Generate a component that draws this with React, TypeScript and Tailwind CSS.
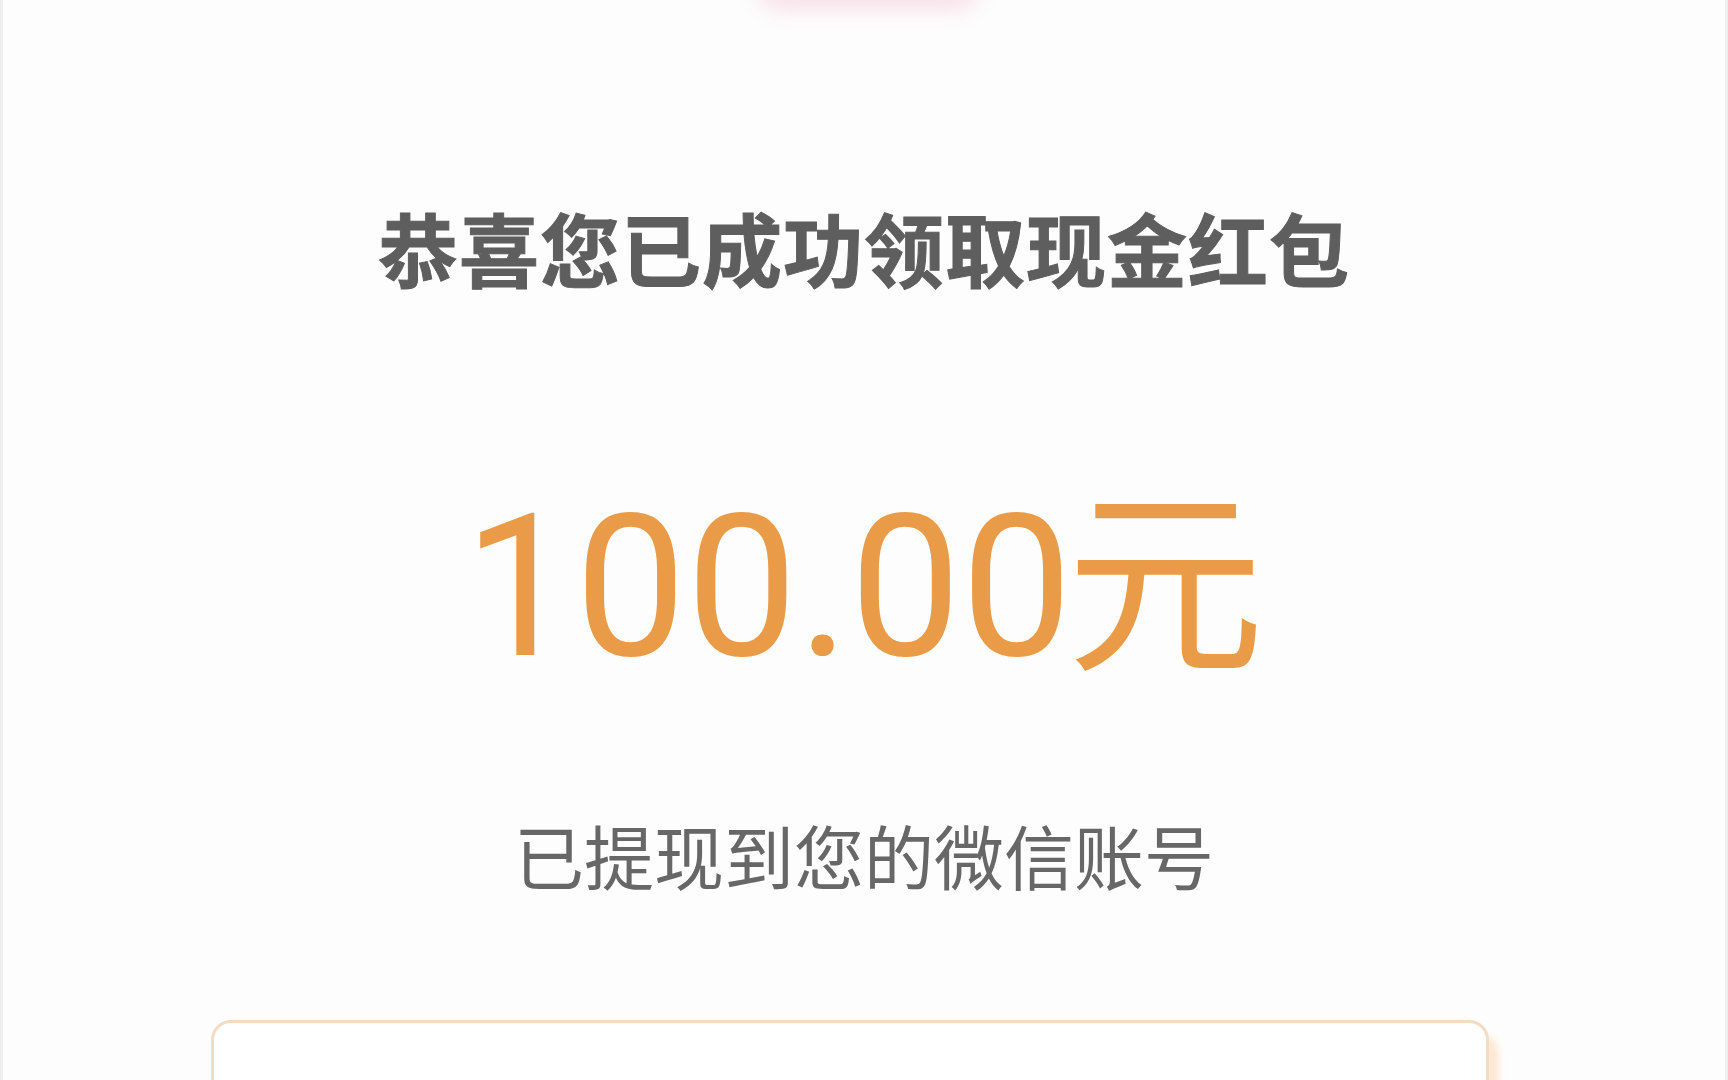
import React from 'react';

// Red packet withdrawal result screen
const amount = '100.00';

export default function App() {
    return (
        <div className="relative h-screen w-full overflow-hidden bg-[#fdfdfd] border-l-[3px] border-r-[3px] border-[#efefef]">
            <div className="absolute left-[755px] top-[-30px] h-[40px] w-[220px] rounded-full bg-[#f6d6e2] blur-[10px] opacity-70" />

            <div
                className="flex flex-col items-center pt-[214px]"
                style={{ fontFamily: 'Roboto, "Noto Sans CJK SC", sans-serif' }}
            >
                <h1 className="text-[80px] leading-none font-bold text-[#5e5e5e] tracking-[1px] [-webkit-text-stroke:1px_#5e5e5e]">
                    恭喜您已成功领取现金红包
                </h1>

                <div className="mt-[194px] flex items-end leading-none text-[#e99b48]">
                    <span className="text-[198px] leading-none">{amount}</span>
                    <span className="-ml-[6px] text-[198px] leading-none">元</span>
                </div>

                <p className="mt-[140px] text-[70px] leading-none text-[#676767]">
                    已提现到您的微信账号
                </p>

                <div className="mt-[124px] mr-[28px] h-[200px] w-[1278px] shrink-0 rounded-[20px] border-[3px] border-[#f3dcc4] bg-white shadow-[10px_14px_6px_#fde8d3]" />
            </div>
        </div>
    );
}
